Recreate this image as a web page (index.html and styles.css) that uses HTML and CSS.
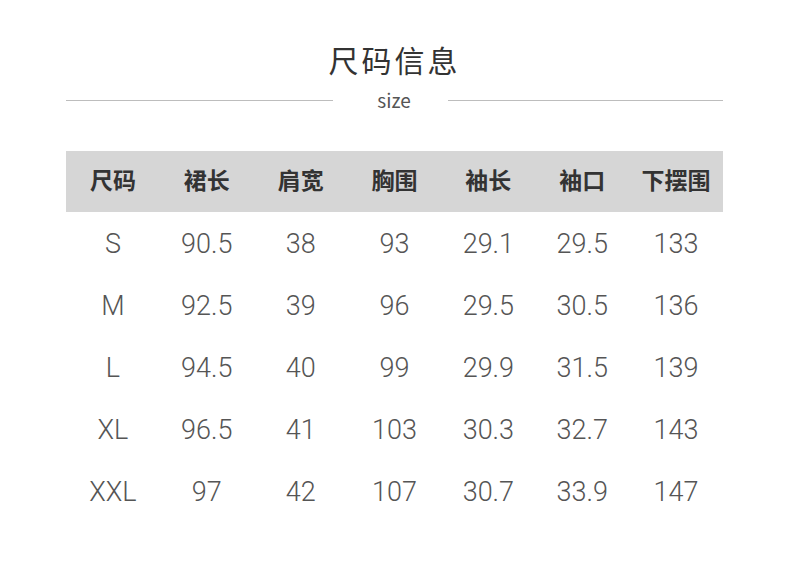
FILE: index.html
```html
<!DOCTYPE html>
<html lang="zh">
<head>
<meta charset="utf-8">
<link rel="stylesheet" href="styles.css">
</head>
<body>
<div class="page">
  <h1 class="title">尺码信息</h1>
  <div class="sub">
    <span class="line line-left"></span>
    <span class="sub-text">size</span>
    <span class="line"></span>
  </div>
  <div class="table">
    <div class="row head">
      <div>尺码</div><div>裙长</div><div>肩宽</div><div>胸围</div><div>袖长</div><div>袖口</div><div>下摆围</div>
    </div>
    <div class="row">
      <div>S</div><div>90.5</div><div>38</div><div>93</div><div>29.1</div><div>29.5</div><div>133</div>
    </div>
    <div class="row">
      <div>M</div><div>92.5</div><div>39</div><div>96</div><div>29.5</div><div>30.5</div><div>136</div>
    </div>
    <div class="row">
      <div>L</div><div>94.5</div><div>40</div><div>99</div><div>29.9</div><div>31.5</div><div>139</div>
    </div>
    <div class="row">
      <div>XL</div><div>96.5</div><div>41</div><div>103</div><div>30.3</div><div>32.7</div><div>143</div>
    </div>
    <div class="row">
      <div>XXL</div><div>97</div><div>42</div><div>107</div><div>30.7</div><div>33.9</div><div>147</div>
    </div>
  </div>
</div>
</body>
</html>
```
FILE: styles.css
```css
html, body {
  margin: 0;
  padding: 0;
  background: #ffffff;
}
.page {
  width: 790px;
  height: 564px;
  box-sizing: border-box;
  padding: 39px 67px 0 66px;
  font-family: "Noto Sans CJK SC", "Noto Sans", sans-serif;
}
.title {
  margin: 0;
  height: 40px;
  line-height: 40px;
  text-align: center;
  font-size: 30px;
  font-weight: 400;
  letter-spacing: 3px;
  color: #333333;
}
.sub {
  margin-top: 11px;
  height: 20px;
  display: flex;
  align-items: center;
}
.line {
  flex: 1;
  height: 1px;
  background: #bdbdbd;
}
.line-left {
  flex: none;
  width: 267px;
}
.sub-text {
  width: 115px;
  padding-left: 7px;
  box-sizing: border-box;
  text-align: center;
  font-size: 19px;
  line-height: 20px;
  color: #555555;
  font-family: "Noto Sans CJK SC", sans-serif;
}
.table {
  margin-top: 41px;
}
.row {
  display: grid;
  grid-template-columns: repeat(7, 1fr);
  height: 62px;
  box-sizing: border-box;
  padding-top: 2px;
  align-items: center;
  text-align: center;
  font-family: Roboto, "Noto Sans", sans-serif;
  font-weight: 300;
  font-size: 27px;
  color: #555555;
}
.row.head {
  height: 61px;
  padding-top: 0;
  padding-bottom: 6px;
  background: #d6d6d6;
  font-family: "Noto Sans CJK SC", sans-serif;
  font-weight: 700;
  font-size: 23px;
  color: #333333;
}
```
